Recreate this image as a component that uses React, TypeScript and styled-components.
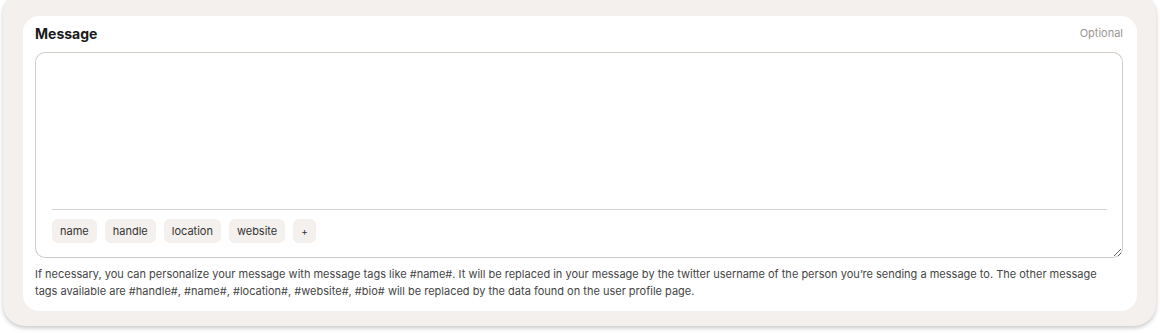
import { styled, createGlobalStyle } from "styled-components";

const GlobalStyle = createGlobalStyle`
  body {
    margin: 0;
    background: #ffffff;
    font-family: Inter, "Liberation Sans", sans-serif;
  }
  * {
    box-sizing: border-box;
  }
`;

const Page = styled.div`
  padding: 0 4px 8px 3px;
  overflow: hidden;
`;

const Shell = styled.div`
  margin-top: -8px;
  background: #f3f0ed;
  border-radius: 22px;
  padding: 24px 19px 15px 20px;
  box-shadow: 0 2px 4px rgba(0, 0, 0, 0.22);
`;

const Card = styled.div`
  background: #ffffff;
  border-radius: 16px;
  padding: 8px 14px 11px 12px;
`;

const Header = styled.div`
  display: flex;
  justify-content: space-between;
  align-items: center;
  height: 18px;
  margin-bottom: 10px;
`;

const Title = styled.h3`
  margin: 0;
  font-size: 14px;
  font-weight: 700;
  color: #1a1a1a;
`;

const Hint = styled.span`
  font-size: 11px;
  color: #9a9693;
`;

const Editor = styled.div`
  display: flex;
  flex-direction: column;
  height: 206px;
  border: 1px solid #d3cdc8;
  border-bottom-color: #cbcbcb;
  border-radius: 10px;
  padding: 0 15px 14px 16px;
  resize: vertical;
  overflow: hidden;
`;

const Input = styled.textarea`
  flex: 1;
  border: none;
  outline: none;
  resize: none;
  padding: 12px 0;
  font-family: inherit;
  font-size: 13px;
  color: #222;
`;

const Divider = styled.hr`
  margin: 0 0 9px;
  border: none;
  border-top: 1px solid #d4d4d4;
`;

const Tags = styled.div`
  display: flex;
  gap: 8px;
`;

const Tag = styled.button<{ $compact?: boolean }>`
  height: 24px;
  padding: 0 8px;
  border: none;
  border-radius: 6px;
  background: #f3f0ed;
  font-family: inherit;
  font-size: ${(p) => (p.$compact ? "10px" : "11px")};
  color: #333333;
  cursor: pointer;
`;

const Help = styled.p`
  margin: 8px 0 0;
  padding-right: 24px;
  font-size: 11px;
  line-height: 17px;
  color: #454545;
`;

const tags = ["name", "handle", "location", "website"];

export default function App() {
  return (
    <Page>
      <GlobalStyle />
      <Shell>
        <Card>
          <Header>
            <Title>Message</Title>
            <Hint>Optional</Hint>
          </Header>
          <Editor>
            <Input />
            <Divider />
            <Tags>
              {tags.map((t) => (
                <Tag key={t}>{t}</Tag>
              ))}
              <Tag $compact>+</Tag>
            </Tags>
          </Editor>
          <Help>
            If necessary, you can personalize your message with message tags
            like #name#. It will be replaced in your message by the twitter
            username of the person you’re sending a message to. The other
            message tags available are #handle#, #name#, #location#, #website#,
            #bio# will be replaced by the data found on the user profile page.
          </Help>
        </Card>
      </Shell>
    </Page>
  );
}
